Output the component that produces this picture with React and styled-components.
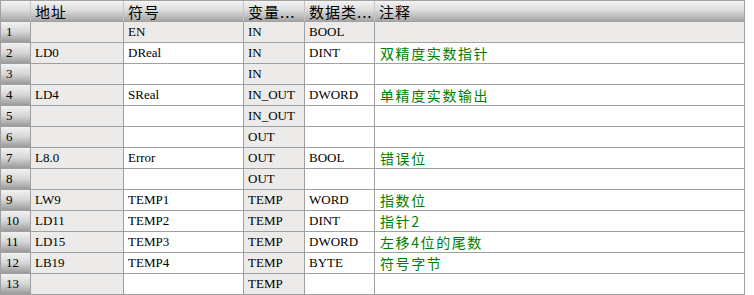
import React from "react";
import styled, { createGlobalStyle } from "styled-components";

const GlobalStyle = createGlobalStyle`
  html, body {
    margin: 0;
    padding: 0;
    background: #ffffff;
  }
  * {
    box-sizing: border-box;
  }
`;

const columns = ["地址", "符号", "变量...", "数据类...", "注释"];

const rows = [
  ["", "EN", "IN", "BOOL", ""],
  ["LD0", "DReal", "IN", "DINT", "双精度实数指针"],
  ["", "", "IN", "", ""],
  ["LD4", "SReal", "IN_OUT", "DWORD", "单精度实数输出"],
  ["", "", "IN_OUT", "", ""],
  ["", "", "OUT", "", ""],
  ["L8.0", "Error", "OUT", "BOOL", "错误位"],
  ["", "", "OUT", "", ""],
  ["LW9", "TEMP1", "TEMP", "WORD", "指数位"],
  ["LD11", "TEMP2", "TEMP", "DINT", "指针2"],
  ["LD15", "TEMP3", "TEMP", "DWORD", "左移4位的尾数"],
  ["LB19", "TEMP4", "TEMP", "BYTE", "符号字节"],
  ["", "", "TEMP", "", ""],
];

// address + variable type columns are always read-only (grey)
const lockedCols = [0, 2];

const Grid = styled.div`
  display: grid;
  grid-template-columns: 30px 93px 120px 61px 70px 370px;
  grid-auto-rows: 21px;
  width: 745px;
  border-top: 1px solid #a0a0a0;
  border-left: 1px solid #a0a0a0;
  font-family: "Liberation Serif", "Times New Roman", serif;
  font-size: 13px;
  color: #000;
`;

const HeadCell = styled.div`
  display: flex;
  align-items: center;
  padding-left: ${(p) => (p.$corner ? 0 : 4)}px;
  border-right: 1px solid ${(p) => (p.$last ? "#a0a0a0" : "#c4c4c4")};
  border-bottom: 1px solid #a0a0a0;
  background: linear-gradient(to bottom, #f4f4f4 0%, #dcdcdc 45%, #a6a6a6 100%);
  font-family: "Noto Sans CJK SC", "Noto Sans", sans-serif;
  font-size: 15px;
  letter-spacing: 1px;
  white-space: nowrap;
  overflow: hidden;
`;

const RowNum = styled.div`
  display: flex;
  align-items: center;
  padding-left: 5px;
  border-right: 1px solid #a0a0a0;
  border-bottom: 1px solid #a0a0a0;
  background: linear-gradient(to bottom, #f2f2f2 0%, #d6d6d6 50%, #9a9a9a 100%);
`;

const Cell = styled.div`
  display: flex;
  align-items: center;
  padding-left: 4px;
  border-right: 1px solid #a0a0a0;
  border-bottom: 1px solid #a0a0a0;
  background: ${(p) => (p.$locked ? "#ecebe9" : "#ffffff")};
  white-space: nowrap;
  overflow: hidden;
`;

const Comment = styled.span`
  padding-left: 1px;
  color: #008000;
  font-family: "Noto Sans CJK SC", "Noto Sans", sans-serif;
  font-size: 14px;
  letter-spacing: 1.6px;
`;

export default function App() {
  return (
    <>
      <GlobalStyle />
      <Grid>
        <HeadCell $corner />
        {columns.map((name, i) => (
          <HeadCell key={name} $last={i === columns.length - 1}>
            {name}
          </HeadCell>
        ))}
        {rows.map((row, r) => (
          <React.Fragment key={r}>
            <RowNum>{r + 1}</RowNum>
            {row.map((value, c) => (
              <Cell key={c} $locked={r === 0 || lockedCols.includes(c)}>
                {c === 4 ? <Comment>{value}</Comment> : value}
              </Cell>
            ))}
          </React.Fragment>
        ))}
      </Grid>
    </>
  );
}
